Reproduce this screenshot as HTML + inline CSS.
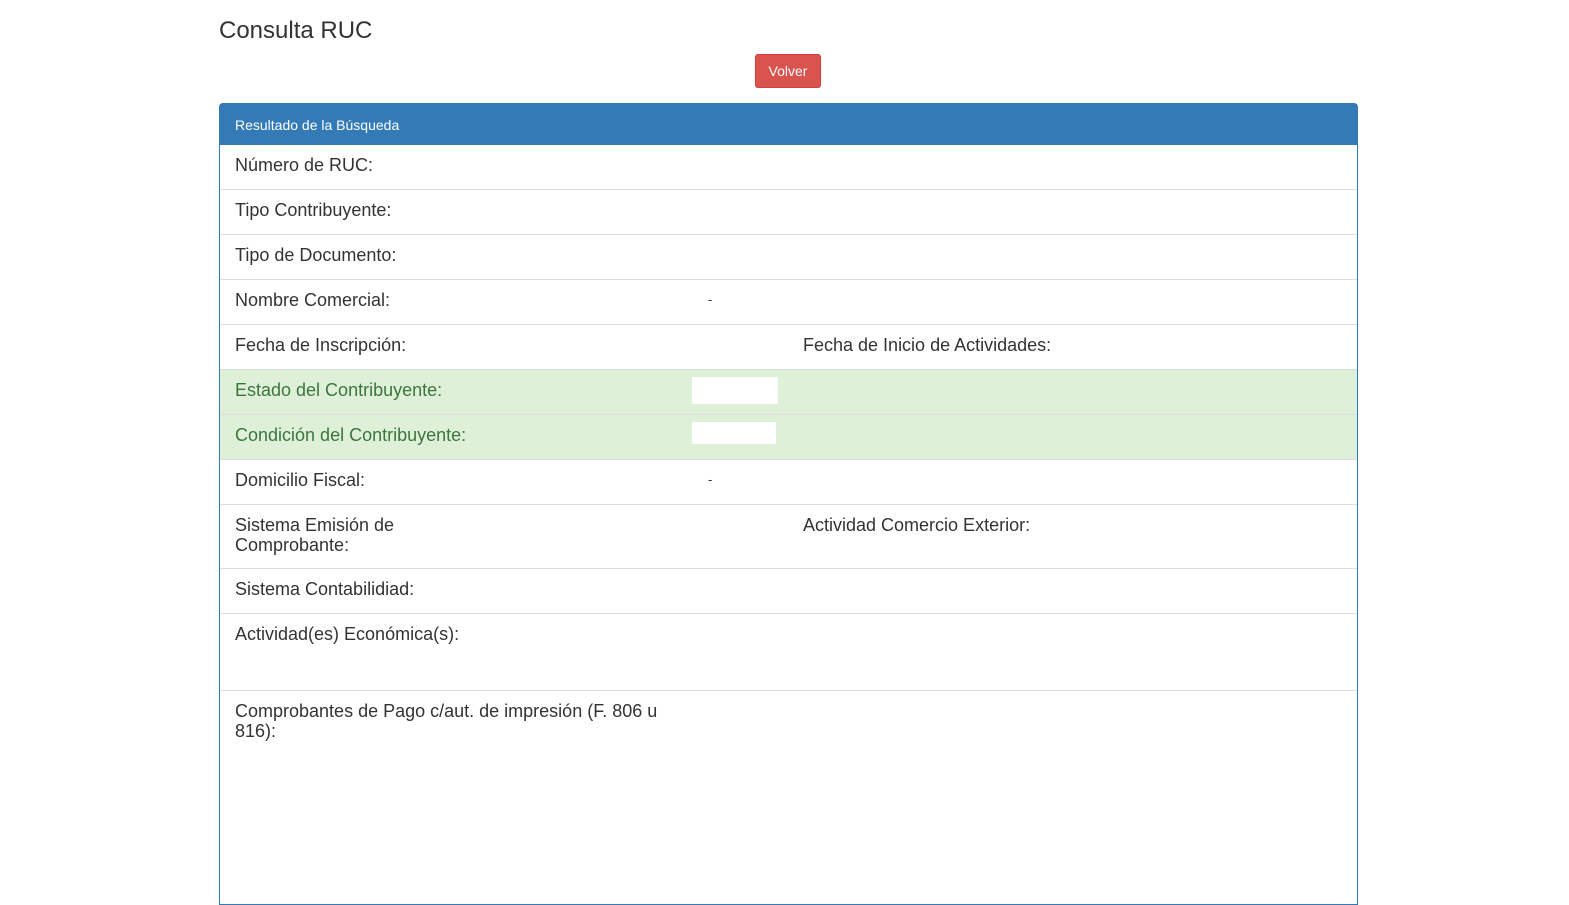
<!DOCTYPE html>
<html><head><meta charset="utf-8"><style>
body{margin:0;background:#fff;font-family:"Liberation Sans",Arial,sans-serif;color:#333;width:1569px;height:763px;overflow:hidden;position:relative}
h1{position:absolute;left:219px;top:16px;margin:0;font-size:24px;font-weight:normal;line-height:30px}
.btn{position:absolute;left:755px;top:54px;width:64px;height:32px;background:#d9534f;border:1px solid #d43f3a;border-radius:3px;color:#fff;font-size:14px;text-align:center;line-height:32px}
.panel{position:absolute;left:219px;top:103px;width:1137px;height:800px;border:1px solid #337ab7;border-radius:4px 4px 0 0}
.hd{height:41px;background:#337ab7;color:#fff;font-size:14px;line-height:42px;padding-left:15px}
.row{position:absolute;left:0;width:1137px;border-top:1px solid #ddd;font-size:18px;line-height:20px}
.row span{position:absolute;top:10px}
.l{left:15px;width:430px}
.g{background:#dff0d8;color:#3c763d}
.box{position:absolute;background:#fff}
</style></head><body>
<h1>Consulta RUC</h1>
<div class="btn">Volver</div>
<div class="panel">
<div class="hd">Resultado de la Búsqueda</div>
<div class="row" style="top:41px;height:44px;border-top:none"><span class="l">Número de RUC:</span></div>
<div class="row" style="top:85px;height:44px"><span class="l">Tipo Contribuyente:</span></div>
<div class="row" style="top:130px;height:44px"><span class="l">Tipo de Documento:</span></div>
<div class="row" style="top:175px;height:44px"><span class="l">Nombre Comercial:</span><span style="left:488px;font-size:13px">-</span></div>
<div class="row" style="top:220px;height:44px"><span class="l">Fecha de Inscripción:</span><span style="left:583px">Fecha de Inicio de Actividades:</span></div>
<div class="row g" style="top:265px;height:44px"><span class="l">Estado del Contribuyente:</span><div class="box" style="left:472px;top:7px;width:86px;height:27px"></div></div>
<div class="row g" style="top:310px;height:44px"><span class="l">Condición del Contribuyente:</span><div class="box" style="left:472px;top:7px;width:84px;height:22px"></div></div>
<div class="row" style="top:355px;height:44px"><span class="l">Domicilio Fiscal:</span><span style="left:488px;font-size:13px">-</span></div>
<div class="row" style="top:400px;height:63px"><span class="l" style="width:200px">Sistema Emisión de Comprobante:</span><span style="left:583px">Actividad Comercio Exterior:</span></div>
<div class="row" style="top:464px;height:44px"><span class="l">Sistema Contabilidiad:</span></div>
<div class="row" style="top:509px;height:76px"><span class="l">Actividad(es) Económica(s):</span></div>
<div class="row" style="top:586px;height:200px"><span class="l">Comprobantes de Pago c/aut. de impresión (F. 806 u 816):</span></div>
</div>
</body></html>
